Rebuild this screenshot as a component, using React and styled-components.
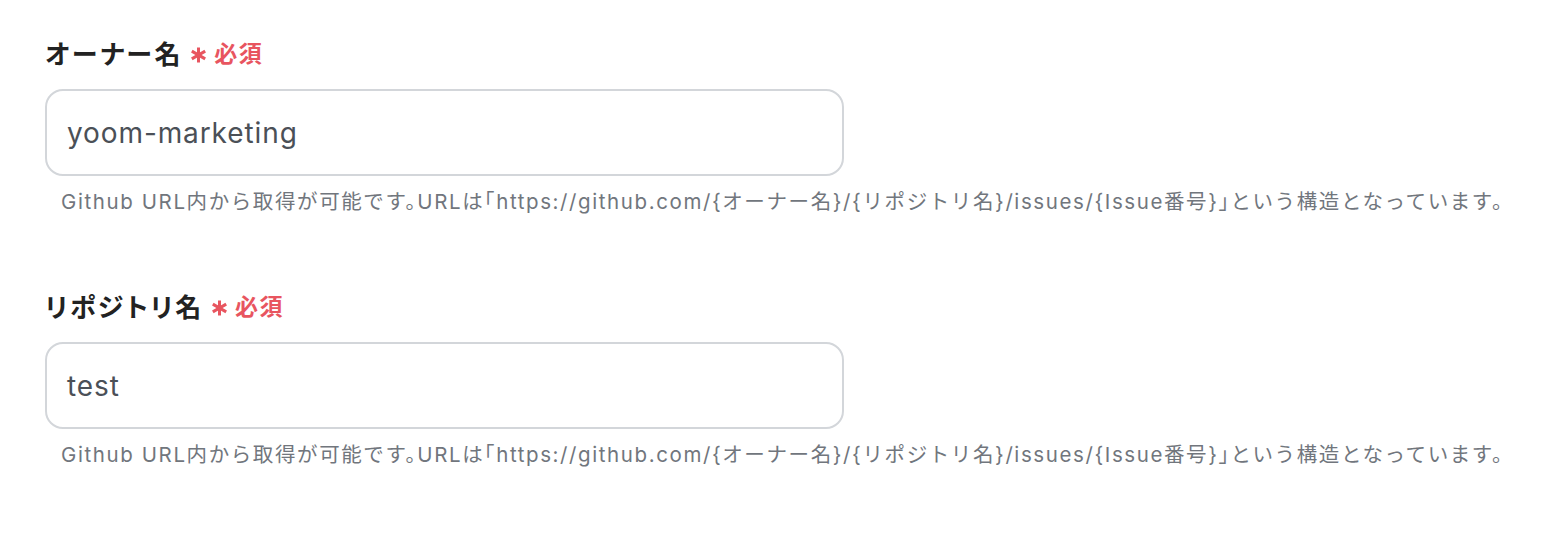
import React from "react";
import styled, { createGlobalStyle } from "styled-components";

const GlobalStyle = createGlobalStyle`
  body {
    margin: 0;
    background: #ffffff;
    font-family: Inter, "Noto Sans CJK JP", sans-serif;
  }
`;

const Page = styled.div`
  padding: 33px 45px 0;
  display: flex;
  flex-direction: column;
  gap: 72px;
`;

const Field = styled.div`
  display: flex;
  flex-direction: column;
`;

const LabelRow = styled.div`
  display: flex;
  align-items: center;
  height: 38px;
  margin-bottom: 18px;
`;

const Label = styled.span`
  font-size: 26px;
  font-weight: 700;
  color: #222222;
  letter-spacing: 2.6px;
  font-feature-settings: "palt";
`;

const Required = styled.span`
  display: flex;
  align-items: center;
  margin-left: 7px;
  color: #e8555f;
  font-size: 23px;
  font-weight: 700;
  letter-spacing: 1.5px;
  gap: 7px;

  svg {
    margin-top: 5px;
  }
`;

const Input = styled.div`
  box-sizing: border-box;
  width: 799px;
  height: 87px;
  border: 2px solid #d3d6da;
  border-radius: 18px;
  padding: 0 20px;
  display: flex;
  align-items: center;
  font-size: 28px;
  color: #4b5057;
  letter-spacing: 0.9px;
`;

const Help = styled.p`
  margin: 14px 0 0 16px;
  font-size: 20.5px;
  color: #71767d;
  line-height: 24px;
  letter-spacing: 1.6px;
  white-space: nowrap;
  font-feature-settings: "halt";
`;

const Asterisk = () => (
  <svg width="17" height="16" viewBox="0 0 17 16">
    <g stroke="#e8555f" strokeWidth="3" strokeLinecap="butt">
      <line x1="8.5" y1="0.5" x2="8.5" y2="15.5" />
      <line x1="1.8" y1="4.1" x2="15.2" y2="11.9" />
      <line x1="1.8" y1="11.9" x2="15.2" y2="4.1" />
    </g>
  </svg>
);

const help =
  "Github URL内から取得が可能です。URLは「https://github.com/{オーナー名}/{リポジトリ名}/issues/{Issue番号}」という構造となっています。";

const fields = [
  { label: "オーナー名", value: "yoom-marketing" },
  { label: "リポジトリ名", value: "test" },
];

export default function App() {
  return (
    <>
      <GlobalStyle />
      <Page>
        {fields.map((f) => (
          <Field key={f.label}>
            <LabelRow>
              <Label>{f.label}</Label>
              <Required>
                <Asterisk />
                必須
              </Required>
            </LabelRow>
            <Input>{f.value}</Input>
            <Help>{help}</Help>
          </Field>
        ))}
      </Page>
    </>
  );
}
